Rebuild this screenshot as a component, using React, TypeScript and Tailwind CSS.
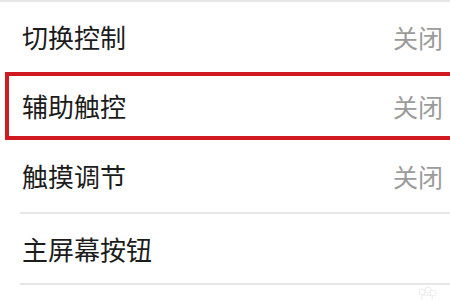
import React from "react";

type Item = { label: string; value?: string; highlight?: boolean };

const items: Item[] = [
  { label: "切换控制", value: "关闭" },
  { label: "辅助触控", value: "关闭", highlight: true },
  { label: "触摸调节", value: "关闭" },
  { label: "主屏幕按钮" },
];

const font = { fontFamily: '"Noto Sans CJK SC", "Noto Sans", sans-serif' };

function Row({ item }: { item: Item }) {
  return (
    <div className="flex h-full items-center justify-between pl-[22px] pr-[7px]">
      <span className="text-[26px] leading-none text-[#1c1c1c]">{item.label}</span>
      {item.value && <span className="text-[25px] leading-none text-[#9b9b9b]">{item.value}</span>}
    </div>
  );
}

export default function App() {
  return (
    <div className="relative h-[300px] w-[450px] overflow-hidden bg-white" style={font}>
      <div className="h-[2px] bg-[#e6e6e6]" />
      <div className="h-[70px]">
        <Row item={items[0]} />
      </div>
      {/* highlighted row, the red frame runs past the right edge */}
      <div className="-mr-[20px] ml-[5px] h-[68px] border-[4px] border-[#d01a1f]">
        <div className="-ml-[9px] mr-[16px] h-full">
          <Row item={items[1]} />
        </div>
      </div>
      <div className="h-[72px]">
        <Row item={items[2]} />
      </div>
      <div className="ml-[20px] h-[2px] bg-[#e6e6e6]" />
      <div className="h-[69px]">
        <Row item={items[3]} />
      </div>
      <div className="ml-[20px] h-[2px] bg-[#e6e6e6]" />

      {/* faint watermark */}
      <svg className="absolute bottom-0 right-[10px]" width="26" height="14" viewBox="0 0 26 14">
        <g fill="none" stroke="#ececec" strokeWidth="1">
          <circle cx="8" cy="6" r="3" />
          <circle cx="14" cy="4" r="3" />
          <circle cx="19" cy="7" r="3" />
          <ellipse cx="13" cy="12" rx="6" ry="3" />
        </g>
      </svg>
    </div>
  );
}
